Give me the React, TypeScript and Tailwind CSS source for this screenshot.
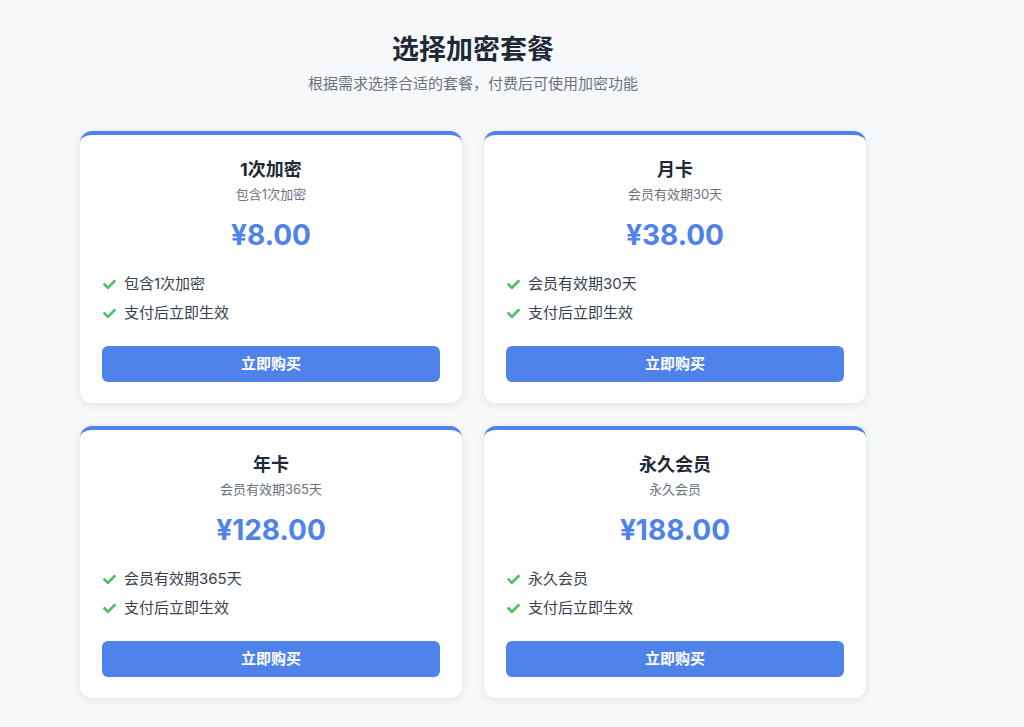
import React from "react";
import { FaCheck } from "react-icons/fa";

const plans = [
  { name: "1次加密", desc: "包含1次加密", price: "¥8.00", features: ["包含1次加密", "支付后立即生效"] },
  { name: "月卡", desc: "会员有效期30天", price: "¥38.00", features: ["会员有效期30天", "支付后立即生效"] },
  { name: "年卡", desc: "会员有效期365天", price: "¥128.00", features: ["会员有效期365天", "支付后立即生效"] },
  { name: "永久会员", desc: "永久会员", price: "¥188.00", features: ["永久会员", "支付后立即生效"] },
];

export default function App() {
  return (
    <div
      className="min-h-[727px] bg-[#f7f8fa] pt-[32px] pl-[80px]"
      style={{ fontFamily: 'Inter, "Noto Sans CJK SC", sans-serif' }}
    >
      <div className="w-[786px]">
        <h1 className="text-center text-[27px] font-bold leading-[36px] text-[#1f2937]">选择加密套餐</h1>
        <p className="mt-[6px] text-center text-[15px] leading-[20px] text-[#6b7280]">根据需求选择合适的套餐，付费后可使用加密功能</p>
        <div className="mt-[37px] grid grid-cols-2 gap-x-[22px] gap-y-[23px]">
          {plans.map((p) => (
            <div
              key={p.name}
              className="rounded-[12px] border-t-[4px] border-[#4f83ea] bg-white px-[22px] pt-[21px] pb-[21px] shadow-[0_2px_10px_rgba(0,0,0,0.09)]"
            >
              <div className="text-center text-[18px] font-bold leading-[28px] text-[#1f2937]">{p.name}</div>
              <div className="text-center text-[13px] leading-[20px] text-[#6b7280]">{p.desc}</div>
              <div className="mt-[13px] text-center text-[28px] font-bold leading-[36px] text-[#4f83ea]">{p.price}</div>
              <div className="mt-[21px] flex flex-col gap-[9px]">
                {p.features.map((f) => (
                  <div key={f} className="flex items-center gap-[8px] pl-[1px] text-[15px] leading-[20px] text-[#374151]">
                    <FaCheck className="h-[13px] w-[13px] shrink-0 text-[#52be6a]" />
                    <span>{f}</span>
                  </div>
                ))}
              </div>
              <button className="mt-[23px] flex h-[36px] w-full items-center justify-center rounded-[6px] bg-[#4f83ea] text-[15px] font-bold text-white">
                立即购买
              </button>
            </div>
          ))}
        </div>
      </div>
    </div>
  );
}
